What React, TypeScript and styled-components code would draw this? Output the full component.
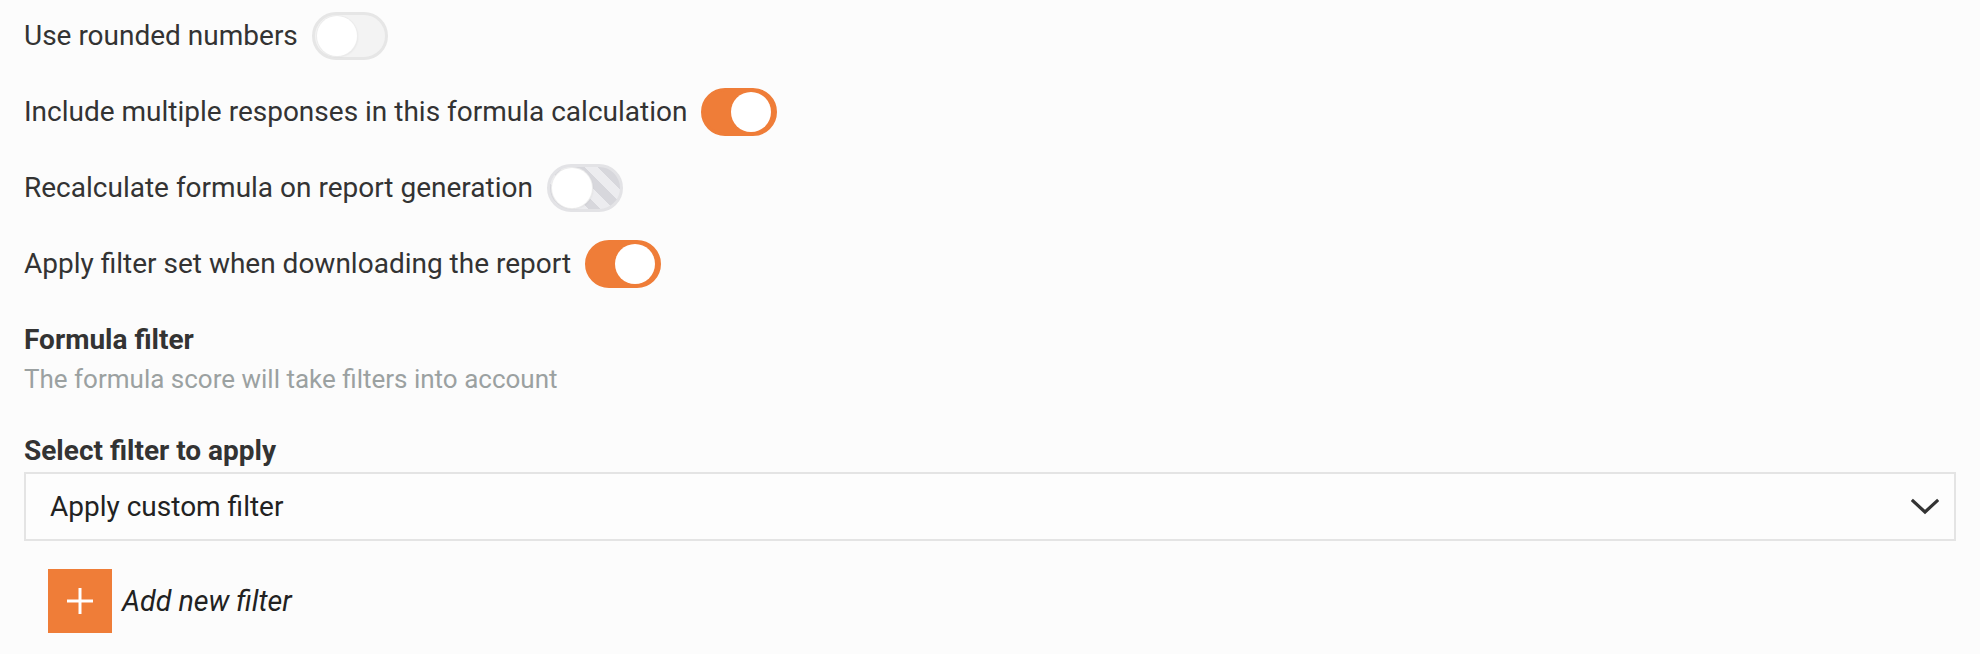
import React from "react";
import styled, { createGlobalStyle, css } from "styled-components";

const GlobalStyle = createGlobalStyle`
  html, body {
    margin: 0;
    padding: 0;
    background: #fcfcfc;
  }
  body {
    font-family: Roboto, "Liberation Sans", Arial, sans-serif;
    color: #333333;
  }
  * { box-sizing: border-box; }
`;

const Page = styled.div`
  display: flex;
  flex-direction: column;
  padding: 12px 24px 20px 24px;
  width: 1980px;
`;

const ToggleList = styled.div`
  display: flex;
  flex-direction: column;
  gap: 28px;
`;

const ToggleRow = styled.label`
  display: flex;
  align-items: center;
  gap: 14px;
  height: 48px;
  font-size: 28px;
  line-height: 36px;
  color: #333333;
`;

type TrackProps = { $on?: boolean; $disabled?: boolean };

const Track = styled.span<TrackProps>`
  display: flex;
  align-items: center;
  justify-content: ${(p) => (p.$on ? "flex-end" : "flex-start")};
  width: 76px;
  height: 48px;
  border-radius: 24px;
  padding: 0 3px 0 2px;
  border: 3px solid #e6e6e6;
  background: #f3f3f3;
  flex: none;
  ${(p) =>
    p.$on &&
    css`
      border-color: #ef7d38;
      background: #ef7d38;
    `}
  ${(p) =>
    p.$disabled &&
    css`
      border-color: #e3e3e6;
      background: repeating-linear-gradient(
        45deg,
        #ececef 0px,
        #ececef 9px,
        #d7d7dc 9px,
        #d7d7dc 18px
      );
    `}
`;

const Knob = styled.span<TrackProps>`
  width: 40px;
  height: 40px;
  border-radius: 50%;
  background: #ffffff;
  box-shadow: ${(p) => (p.$on ? "none" : "0 0 0 1px #ececec, 1px 1px 2px rgba(0,0,0,0.06)")};
`;

const Section = styled.div`
  display: flex;
  flex-direction: column;
  margin-top: 34px;
`;

const Heading = styled.div`
  font-size: 28px;
  line-height: 36px;
  font-weight: 700;
  color: #333333;
`;

const Hint = styled.div`
  font-size: 26px;
  line-height: 36px;
  color: #9ba1a1;
  margin-top: 3px;
`;

const FieldLabel = styled(Heading)`
  margin-top: 36px;
`;

const SelectBox = styled.div`
  display: flex;
  align-items: center;
  justify-content: space-between;
  margin-top: 3px;
  height: 69px;
  border: 2px solid #e4e4e4;
  padding: 0 15px 0 24px;
  font-size: 28px;
  color: #222222;
  background: #fdfdfd;
`;

const AddRow = styled.div`
  display: flex;
  align-items: center;
  gap: 10px;
  margin-top: 28px;
  margin-left: 24px;
`;

const AddButton = styled.span`
  display: flex;
  align-items: center;
  justify-content: center;
  width: 64px;
  height: 64px;
  background: #ef7d38;
`;

const AddText = styled.span`
  font-size: 28.6px;
  font-style: italic;
  color: #222222;
`;

const Toggle = ({ on, disabled }: { on?: boolean; disabled?: boolean }) => (
  <Track $on={on} $disabled={disabled}>
    <Knob $on={on} />
  </Track>
);

export default function App() {
  return (
    <>
      <GlobalStyle />
      <Page>
        <ToggleList>
          <ToggleRow>
            Use rounded numbers
            <Toggle />
          </ToggleRow>
          <ToggleRow>
            Include multiple responses in this formula calculation
            <Toggle on />
          </ToggleRow>
          <ToggleRow>
            Recalculate formula on report generation
            <Toggle disabled />
          </ToggleRow>
          <ToggleRow>
            Apply filter set when downloading the report
            <Toggle on />
          </ToggleRow>
        </ToggleList>
        <Section>
          <Heading>Formula filter</Heading>
          <Hint>The formula score will take filters into account</Hint>
        </Section>
        <FieldLabel>Select filter to apply</FieldLabel>
        <SelectBox>
          <span>Apply custom filter</span>
          <svg width="28" height="18" viewBox="0 0 28 18" aria-hidden="true">
            <polyline
              points="2,3 14,14 26,3"
              fill="none"
              stroke="#333"
              strokeWidth="3.2"
              strokeLinecap="square"
            />
          </svg>
        </SelectBox>
        <AddRow>
          <AddButton>
            <svg width="28" height="28" viewBox="0 0 28 28" aria-hidden="true">
              <line x1="1" y1="14" x2="27" y2="14" stroke="#fff" strokeWidth="3" />
              <line x1="14" y1="1" x2="14" y2="27" stroke="#fff" strokeWidth="3" />
            </svg>
          </AddButton>
          <AddText>Add new filter</AddText>
        </AddRow>
      </Page>
    </>
  );
}
